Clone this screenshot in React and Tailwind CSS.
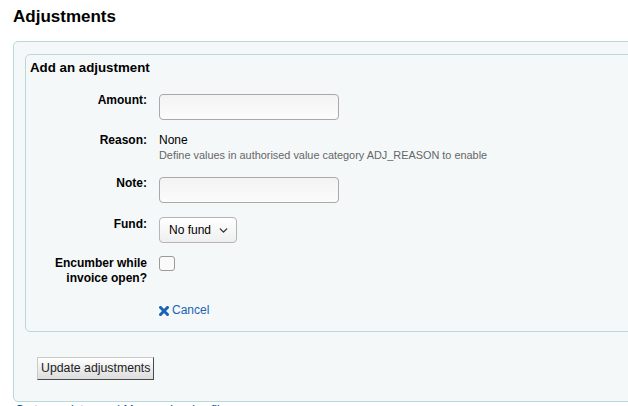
import { ChevronDown } from 'lucide-react';

const Label = ({ children, className = '' }) => (
  <div className={`w-[117px] shrink-0 text-right text-[12px] font-bold leading-[15px] text-black ${className}`}>
    {children}
  </div>
);

const TextInput = () => (
  <input
    type="text"
    className="h-[26px] w-[180px] rounded-[4px] border border-[#a9a9a9] bg-gradient-to-b from-[#f3f3f3] to-[#fcfcfc] px-2 text-[12px] outline-none"
  />
);

export default function App() {
  return (
    <div className="h-[406px] w-full overflow-hidden bg-white font-['Liberation_Sans',Arial,sans-serif] text-black">
      <h1 className="ml-[13px] pt-[6px] text-[17px] font-bold leading-[22px]">Adjustments</h1>

      <div className="ml-[13px] mt-[13px] h-[361px] w-[640px] rounded-[5px] border border-[#bcd7d9] bg-[#f4f8f9] pl-[11px] pt-[12px]">
        <fieldset className="h-[278px] rounded-[5px] border border-[#bcd7d9] bg-[#f4f8f9] pl-[4px] pt-[5px]">
          <h3 className="text-[13.3px] font-bold leading-[16px]">Add an adjustment</h3>

          <div className="mt-[18px] flex gap-[12px]">
            <Label className="mt-[-1px]">Amount:</Label>
            <TextInput />
          </div>

          <div className="mt-[13px] flex gap-[12px]">
            <Label>Reason:</Label>
            <div>
              <div className="text-[12px] leading-[15px]">None</div>
              <div className="text-[10.9px] leading-[14px] text-[#666]">
                Define values in authorised value category ADJ_REASON to enable
              </div>
            </div>
          </div>

          <div className="mt-[15px] flex gap-[12px]">
            <Label className="mt-[-1px]">Note:</Label>
            <TextInput />
          </div>

          <div className="mt-[14px] flex gap-[12px]">
            <Label>Fund:</Label>
            <div className="flex h-[26px] w-[78px] items-center justify-between rounded-[4px] border border-[#b5b5b5] bg-gradient-to-b from-white to-[#efefef] pl-[9px] pr-[6px] text-[12px]">
              <span>No fund</span>
              <ChevronDown size={13} strokeWidth={2.5} className="text-[#333]" />
            </div>
          </div>

          <div className="mt-[13px] flex gap-[12px]">
            <Label>
              Encumber while
              <br />
              invoice open?
            </Label>
            <div className="h-[15px] w-[16px] rounded-[3px] border border-[#9a9a9a] bg-[#fafafa]" />
          </div>

          <div className="mt-[17px] flex items-center gap-[3px] pl-[129px] text-[12px] leading-[15px] text-[#1a63b5]">
            <svg width="10" height="10" viewBox="0 0 10 10" className="mt-[1px]">
              <path d="M1.5 1.5 L8.5 8.5 M8.5 1.5 L1.5 8.5" stroke="#1a63b5" strokeWidth="3" strokeLinecap="square" />
            </svg>
            <span>Cancel</span>
          </div>
        </fieldset>

        <div className="mt-[23px] pl-[12px]">
          <button className="h-[23px] border border-[#c9c9c9] border-b-[#4a4a4a] border-r-[#4a4a4a] bg-gradient-to-b from-white to-[#dcdcdc] px-[3px] text-[12.3px] leading-[15px] text-[#222]">
            Update adjustments
          </button>
        </div>
      </div>

      <div className="ml-[15px] mt-[1px] text-[12px] leading-[15px] text-[#004d99]">
        Go to receipt page | Manage invoice files
      </div>
    </div>
  );
}
